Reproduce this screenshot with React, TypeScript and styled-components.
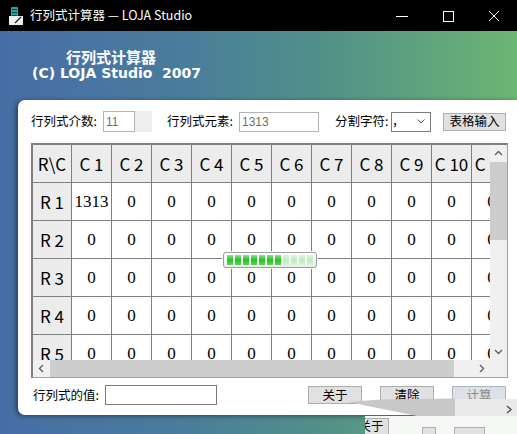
import React from "react";
import styled, { createGlobalStyle } from "styled-components";

const CJK = `"Noto Sans CJK SC", "Noto Sans", sans-serif`;

const GlobalStyle = createGlobalStyle`
  html, body { margin: 0; padding: 0; background: #000; }
  body { width: 517px; height: 434px; overflow: hidden; }
  #root { width: 517px; height: 434px; }
  * { box-sizing: border-box; }
`;

const Window = styled.div`
  position: relative;
  width: 517px;
  height: 434px;
  overflow: hidden;
  display: flex;
  flex-direction: column;
  font-family: ${CJK};
`;

const TitleBar = styled.div`
  height: 31px;
  flex: none;
  background: #000;
  color: #fff;
  display: flex;
  align-items: center;
`;

const IconBox = styled.div`
  margin-left: 9px;
  width: 14px;
  height: 18px;
  display: flex;
`;

const TitleText = styled.span`
  margin-left: 7px;
  font-size: 12.5px;
  line-height: 1;
  white-space: pre;
`;

const Controls = styled.div`
  margin-left: auto;
  display: flex;
  height: 100%;
`;

const ControlButton = styled.div`
  width: 46px;
  height: 31px;
  display: flex;
  align-items: center;
  justify-content: center;
`;

const Body = styled.div`
  flex: 1;
  display: flex;
  flex-direction: column;
  background: linear-gradient(90deg, #466ea6 0%, #4a7c9c 35%, #519089 62%, #6ab672 100%);
`;

const Banner = styled.div`
  padding-top: 18px;
  display: flex;
  flex-direction: column;
  color: #fff;
  font-weight: bold;
`;

const BannerTitle = styled.div`
  padding-left: 66px;
  height: 16px;
  font-size: 15px;
  line-height: 16px;
`;

const BannerCopy = styled.div`
  padding-left: 32px;
  height: 16px;
  font-family: "DejaVu Sans", sans-serif;
  font-size: 14px;
  line-height: 16px;
  white-space: pre;
`;

const Panel = styled.div`
  margin-top: 19px;
  margin-left: 18px;
  height: 315px;
  background: #fff;
  border-radius: 7px 0 0 7px;
  box-shadow: -2px 1px 5px rgba(0, 0, 0, 0.45);
  display: flex;
  flex-direction: column;
  padding: 11px 11px 10px 13px;
`;

const Row = styled.div<{ $h: number }>`
  display: flex;
  align-items: center;
  height: ${(p) => p.$h}px;
  flex: none;
`;

const Label = styled.span<{ $w: number; $ml?: number }>`
  width: ${(p) => p.$w}px;
  margin-left: ${(p) => p.$ml ?? 0}px;
  font-size: 12.5px;
  line-height: 1;
  color: #000;
  white-space: nowrap;
  flex: none;
`;

const Field = styled.input<{ $w: number; $h: number; $dark?: boolean }>`
  width: ${(p) => p.$w}px;
  height: ${(p) => p.$h}px;
  border: 1px solid ${(p) => (p.$dark ? "#7a7a7a" : "#b4b4b4")};
  background: #fff;
  padding: 0 2px;
  font-family: "Liberation Sans", sans-serif;
  font-size: 12px;
  color: #707070;
  outline: none;
  flex: none;
  margin: 0;
`;

const Spinner = styled.div`
  width: 17px;
  height: 21px;
  background: #efefef;
  flex: none;
`;

const SelectBox = styled.div`
  width: 40px;
  height: 20px;
  border: 1px solid #7a7a7a;
  display: flex;
  align-items: center;
  justify-content: space-between;
  padding: 0 5px 0 0;
  font-size: 12.5px;
  line-height: 1;
  flex: none;
`;

const Button = styled.div<{ $w: number; $disabled?: boolean }>`
  width: ${(p) => p.$w}px;
  height: 18px;
  background: ${(p) => (p.$disabled ? "#dde1e6" : "#e1e1e1")};
  border: 1px solid ${(p) => (p.$disabled ? "#a9b6c6" : "#adadad")};
  color: ${(p) => (p.$disabled ? "#8a8a8a" : "#000")};
  display: flex;
  align-items: center;
  justify-content: center;
  font-size: 12.5px;
  line-height: 1;
  flex: none;
`;

const ButtonGroup = styled.div`
  margin-left: auto;
  display: flex;
  gap: 18px;
`;

const GridFrame = styled.div`
  margin-top: 11px;
  margin-bottom: 7px;
  width: 477px;
  height: 235px;
  flex: none;
  border-top: 2px solid #808080;
  border-left: 2px solid #808080;
  border-right: 1px solid #a0a0a0;
  border-bottom: 1px solid #a0a0a0;
  display: grid;
  grid-template-columns: 457px 17px;
  grid-template-rows: 215px 17px;
`;

const Viewport = styled.div`
  overflow: hidden;
  background: #fff;
`;

const Table = styled.div`
  display: grid;
  grid-template-columns: 38px repeat(11, 39px);
  grid-auto-rows: 37px;
  gap: 1px;
  background: #808080;
  width: 478px;
`;

const Cell = styled.div<{ $head?: boolean }>`
  background: ${(p) => (p.$head ? "#ececec" : "#fff")};
  display: flex;
  align-items: center;
  justify-content: center;
  font-family: ${(p) => (p.$head ? CJK : `"Liberation Serif", serif`)};
  font-size: 17px;
  line-height: 1;
  color: #000;
  white-space: nowrap;
  overflow: hidden;
`;

const VScroll = styled.div`
  background: #f0f0f0;
  display: flex;
  flex-direction: column;
`;

const HScroll = styled.div`
  background: #f0f0f0;
  display: flex;
`;

const Corner = styled.div`
  background: #f0f0f0;
`;

const ArrowBox = styled.div`
  width: 17px;
  height: 17px;
  flex: none;
  display: flex;
  align-items: center;
  justify-content: center;
`;

const Thumb = styled.div<{ $len: number; $vertical?: boolean }>`
  background: #cdcdcd;
  flex: none;
  ${(p) => (p.$vertical ? `height: ${p.$len}px; width: 17px;` : `width: ${p.$len}px; height: 17px;`)}
`;

const Track = styled.div`
  flex: 1;
`;

const Progress = styled.div`
  position: absolute;
  left: 223px;
  top: 252px;
  width: 94px;
  height: 16px;
  border: 1px solid #9c9c9c;
  border-radius: 3px;
  background: linear-gradient(#ffffff, #ececec);
  display: flex;
  gap: 2px;
  padding: 2px 0 0 3px;
  box-shadow: 0 0 0 1px rgba(255, 255, 255, 0.8);
`;

const Segment = styled.div<{ $on: boolean }>`
  width: 6px;
  height: 10px;
  background: ${(p) =>
    p.$on
      ? "linear-gradient(#86e386, #25c225 50%, #5ad35a)"
      : "linear-gradient(#d9f5d9, #bfeebf 50%, #d3f3d3)"};
`;

const Smear = styled.svg`
  position: absolute;
  left: 330px;
  top: 392px;
  width: 187px;
  height: 30px;
`;

const GhostStrip = styled.div`
  position: absolute;
  left: 365px;
  top: 416px;
  width: 152px;
  height: 18px;
  background: #f6f8f6;
  overflow: hidden;
  display: flex;
  align-items: flex-end;
`;

const GhostButton = styled.div<{ $w: number; $ml: number; $h: number }>`
  width: ${(p) => p.$w}px;
  height: ${(p) => p.$h}px;
  margin-left: ${(p) => p.$ml}px;
  flex: none;
  background: #e1e1e1;
  border: 1px solid #adadad;
  border-bottom: none;
  display: flex;
  align-items: center;
  justify-content: center;
  font-size: 12.5px;
  line-height: 1;
  color: #000;
`;

const Chevron: React.FC<{ dir: "up" | "down" | "left" | "right" }> = ({ dir }) => {
  const rot = { up: 0, right: 90, down: 180, left: 270 }[dir];
  return (
    <svg width="9" height="9" viewBox="0 0 9 9" style={{ transform: `rotate(${rot}deg)` }}>
      <polyline points="1,6 4.5,2.5 8,6" fill="none" stroke="#606060" strokeWidth="1.4" />
    </svg>
  );
};

const AppIcon = () => (
  <svg width="14" height="18" viewBox="0 0 14 18">
    <rect x="2" y="0" width="7" height="11" rx="1" fill="#1fa99c" />
    <rect x="3" y="2" width="5" height="1" fill="#0b4a44" />
    <rect x="3" y="5" width="5" height="1" fill="#0b4a44" />
    <rect x="3" y="8" width="5" height="1" fill="#0b4a44" />
    <rect x="0" y="9" width="14" height="9" fill="#f2f2f2" />
    <line x1="6" y1="16" x2="12" y2="10" stroke="#222" strokeWidth="1.3" />
  </svg>
);

const cols = Array.from({ length: 11 }, (_, i) => `C ${i + 1}`);
const rows = Array.from({ length: 6 }, (_, i) => `R ${i + 1}`);

export default function App() {
  return (
    <>
      <GlobalStyle />
      <Window>
        <TitleBar>
          <IconBox>
            <AppIcon />
          </IconBox>
          <TitleText>行列式计算器 — LOJA Studio</TitleText>
          <Controls>
            <ControlButton>
              <svg width="12" height="12" viewBox="0 0 12 12">
                <line x1="0" y1="6.5" x2="12" y2="6.5" stroke="#fff" strokeWidth="1" />
              </svg>
            </ControlButton>
            <ControlButton>
              <svg width="12" height="12" viewBox="0 0 12 12">
                <rect x="1.5" y="1.5" width="10" height="10" fill="none" stroke="#fff" strokeWidth="1" />
              </svg>
            </ControlButton>
            <ControlButton>
              <svg width="12" height="12" viewBox="0 0 12 12">
                <path d="M1 1 L11 11 M11 1 L1 11" stroke="#fff" strokeWidth="1" />
              </svg>
            </ControlButton>
          </Controls>
        </TitleBar>
        <Body>
          <Banner>
            <BannerTitle>行列式计算器</BannerTitle>
            <BannerCopy>(C) LOJA Studio  2007</BannerCopy>
          </Banner>
          <Panel>
            <Row $h={21}>
              <Label $w={72}>行列式介数:</Label>
              <Field $w={32} $h={21} readOnly value="11" />
              <Spinner />
              <Label $w={72} $ml={15}>行列式元素:</Label>
              <Field $w={80} $h={20} readOnly value="1313" />
              <Label $w={56} $ml={16}>分割字符:</Label>
              <SelectBox>
                <span>，</span>
                <svg width="8" height="5" viewBox="0 0 8 5">
                  <polyline points="0.5,0.5 4,4 7.5,0.5" fill="none" stroke="#505050" strokeWidth="1" />
                </svg>
              </SelectBox>
              <Button $w={63} style={{ marginLeft: 12 }}>表格输入</Button>
            </Row>
            <GridFrame>
              <Viewport>
                <Table>
                  <Cell $head>{"R\\C"}</Cell>
                  {cols.map((c) => (
                    <Cell $head key={c}>{c}</Cell>
                  ))}
                  {rows.map((r, ri) => (
                    <React.Fragment key={r}>
                      <Cell $head>{r}</Cell>
                      {cols.map((c, ci) => (
                        <Cell key={c}>{ri === 0 && ci === 0 ? "1313" : "0"}</Cell>
                      ))}
                    </React.Fragment>
                  ))}
                </Table>
              </Viewport>
              <VScroll>
                <ArrowBox><Chevron dir="up" /></ArrowBox>
                <Thumb $vertical $len={78} />
                <Track />
                <ArrowBox><Chevron dir="down" /></ArrowBox>
              </VScroll>
              <HScroll>
                <ArrowBox><Chevron dir="left" /></ArrowBox>
                <Thumb $len={404} />
                <Track />
                <ArrowBox><Chevron dir="right" /></ArrowBox>
              </HScroll>
              <Corner />
            </GridFrame>
            <Row $h={20}>
              <Label $w={72} $ml={2}>行列式的值:</Label>
              <Field $w={112} $h={20} $dark readOnly value="" />
              <ButtonGroup>
                <Button $w={54}>关于</Button>
                <Button $w={54}>清除</Button>
                <Button $w={54} $disabled>计算</Button>
              </ButtonGroup>
            </Row>
          </Panel>
        </Body>
        <Progress>
          {Array.from({ length: 11 }, (_, i) => (
            <Segment key={i} $on={i < 7} />
          ))}
        </Progress>
        <Smear viewBox="0 0 187 30">
          <rect x="122" y="7" width="65" height="19" fill="#eaeaea" />
          <polygon points="18,10 50,7.5 125,6.5 125,26 92,25 33,13" fill="#c8c8c8" />
          <polyline points="177,14 181,17.5 177,21" fill="none" stroke="#505050" strokeWidth="1.4" />
        </Smear>
        <GhostStrip>
          <GhostButton $w={36} $ml={-12} $h={16}>关于</GhostButton>
          <GhostButton $w={14} $ml={33} $h={7} />
          <GhostButton $w={31} $ml={18} $h={7} />
        </GhostStrip>
      </Window>
    </>
  );
}
